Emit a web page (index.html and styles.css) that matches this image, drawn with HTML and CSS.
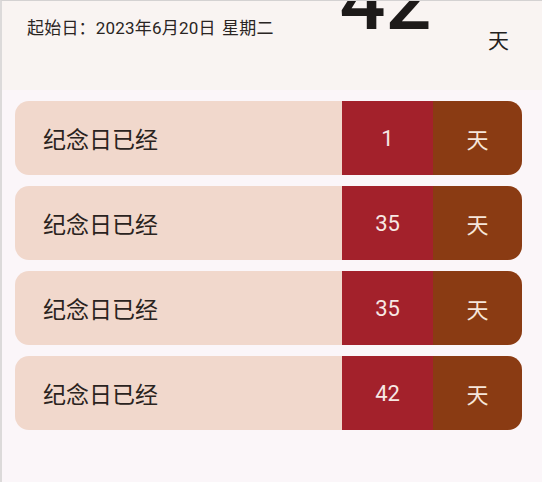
FILE: index.html
```html
<!DOCTYPE html>
<html lang="zh-CN">
<head>
<meta charset="utf-8">
<title>纪念日</title>
<link rel="stylesheet" href="styles.css">
</head>
<body>
<div class="screen">
  <header class="header">
    <div class="start-date">起始日<span class="colon">：</span>2023年6月20日 <span class="weekday">星期二</span></div>
    <div class="total">42</div>
    <div class="total-unit">天</div>
  </header>
  <main class="list">
    <div class="card">
      <div class="card-label">纪念日已经</div>
      <div class="card-num">1</div>
      <div class="card-unit">天</div>
    </div>
    <div class="card">
      <div class="card-label">纪念日已经</div>
      <div class="card-num">35</div>
      <div class="card-unit">天</div>
    </div>
    <div class="card">
      <div class="card-label">纪念日已经</div>
      <div class="card-num">35</div>
      <div class="card-unit">天</div>
    </div>
    <div class="card">
      <div class="card-label">纪念日已经</div>
      <div class="card-num">42</div>
      <div class="card-unit">天</div>
    </div>
  </main>
</div>
</body>
</html>
```

FILE: styles.css
```css
html, body {
  margin: 0;
  padding: 0;
  background: #fbf6f9;
}

body {
  font-family: Roboto, "Noto Sans CJK SC", sans-serif;
  color: #231f1d;
}

.screen {
  width: 542px;
  height: 482px;
  box-sizing: border-box;
  border-top: 1px solid #d4d2d2;
  border-left: 2px solid #dcdada;
  background: #fbf6f9;
  overflow: hidden;
}

.header {
  height: 89px;
  background: #f9f4f2;
  display: grid;
  grid-template-columns: 312px 93px 1fr;
  align-items: start;
  padding-left: 25px;
  overflow: hidden;
}

.start-date {
  margin-top: 17px;
  font-size: 17px;
  line-height: 17px;
  letter-spacing: 0.2px;
  white-space: nowrap;
  color: #2a2523;
}

.colon {
  font-family: "Noto Sans CJK JP", sans-serif;
}

.weekday {
  margin-left: 2px;
}

.total {
  margin-top: -40px;
  font-size: 81px;
  line-height: 81px;
  font-weight: 500;
  text-align: center;
  color: #1d1a19;
}

.total-unit {
  margin-top: 30px;
  margin-left: 56px;
  font-size: 21px;
  line-height: 21px;
  color: #231f1d;
}

.list {
  display: flex;
  flex-direction: column;
  gap: 11px;
  padding: 11px 20px 0 13px;
}

.card {
  height: 74px;
  display: grid;
  grid-template-columns: 1fr 91px 89px;
  border-radius: 14px;
  overflow: hidden;
  background: #f1d8cc;
}

.card-label {
  display: flex;
  align-items: center;
  padding-left: 28px;
  font-size: 23px;
  color: #2a2320;
}

.card-num {
  display: flex;
  align-items: center;
  justify-content: center;
  background: #a3212b;
  color: #f7e8e4;
  font-size: 22px;
}

.card-unit {
  display: flex;
  align-items: center;
  justify-content: center;
  background: #8a3b13;
  color: #f6e6da;
  font-size: 22px;
}
```
